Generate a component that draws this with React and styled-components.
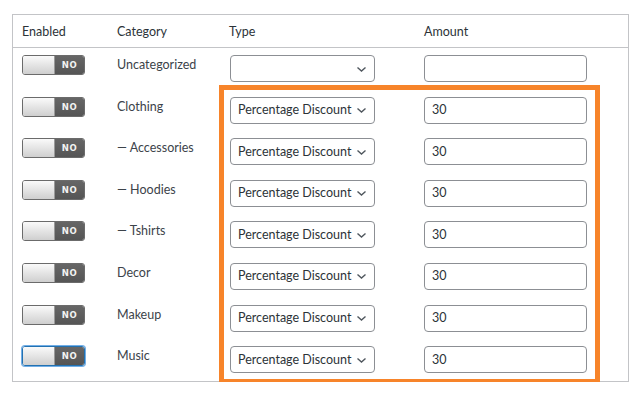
import React from "react";
import styled, { createGlobalStyle } from "styled-components";

const GlobalStyle = createGlobalStyle`
  body {
    margin: 0;
    background: #ffffff;
    font-family: Lato, "Liberation Sans", sans-serif;
    font-size: 12.5px;
    color: #3c434a;
  }
`;

const Page = styled.div`
  position: relative;
  padding: 14px 15px 0 12px;
`;

const Table = styled.div`
  width: 617px;
  border: 1px solid #c3c4c7;
  box-sizing: border-box;
`;

const Row = styled.div`
  display: grid;
  grid-template-columns: 95px 112px 195px 1fr;
  height: ${p => (p.head ? "32px" : "41.6px")};
  border-bottom: ${p => (p.head ? "1px solid #c3c4c7" : "none")};
  align-items: ${p => (p.head ? "center" : "start")};
`;

const Cell = styled.div`
  padding: ${p => (p.head ? "2px 9px 0 9px" : "7px 9px 0 9px")};
  color: ${p => (p.head ? "#2c3338" : "#3c434a")};
  line-height: 18px;
`;

const Label = styled.div`
  padding-top: 1px;
`;

const Toggle = styled.div`
  display: flex;
  width: 63px;
  height: 20px;
  box-sizing: border-box;
  border: 1px solid ${p => (p.focus ? "#2271b1" : "#6b6b6b")};
  box-shadow: ${p => (p.focus ? "0 0 0 1px #72aee6" : "none")};
  border-radius: 3px;
  overflow: hidden;
`;

const Knob = styled.div`
  width: 31px;
  background: linear-gradient(#fafafa, #cfcfcf);
  border-right: 1px solid #9a9a9a;
`;

const Off = styled.div`
  flex: 1;
  background: linear-gradient(#666, #555);
  color: #f2f2f2;
  font-family: "DejaVu Sans", sans-serif;
  font-weight: bold;
  font-size: 8.5px;
  letter-spacing: 0.5px;
  display: flex;
  align-items: center;
  justify-content: center;
`;

const Select = styled.div`
  display: flex;
  align-items: center;
  justify-content: space-between;
  width: 145px;
  height: 27px;
  margin-left: 1px;
  box-sizing: border-box;
  border: 1px solid #8c8f94;
  border-radius: 4px;
  padding: 0 7px 0 7px;
  color: #2c3338;
  white-space: nowrap;
`;

const Input = styled.div`
  display: flex;
  align-items: center;
  width: 163px;
  height: 27px;
  box-sizing: border-box;
  border: 1px solid #8c8f94;
  border-radius: 4px;
  padding: 0 7px;
  color: #2c3338;
`;

const Highlight = styled.div`
  position: absolute;
  left: 219px;
  top: 85px;
  width: 381px;
  height: 299px;
  box-sizing: border-box;
  border: 5px solid #f7842a;
  pointer-events: none;
`;

const Chevron = () => (
  <svg width="11" height="10" viewBox="0 0 11 10">
    <path d="M1.5 3.5 L5.5 7 L9.5 3.5" fill="none" stroke="#50575e" strokeWidth="1.4" />
  </svg>
);

const rows = [
  { name: "Uncategorized", empty: true },
  { name: "Clothing" },
  { name: "— Accessories" },
  { name: "— Hoodies" },
  { name: "— Tshirts" },
  { name: "Decor" },
  { name: "Makeup" },
  { name: "Music", focus: true }
];

export default function App() {
  return (
    <Page>
      <GlobalStyle />
      <Table>
        <Row head>
          <Cell head>Enabled</Cell>
          <Cell head>Category</Cell>
          <Cell head>Type</Cell>
          <Cell head>Amount</Cell>
        </Row>
        {rows.map(r => (
          <Row key={r.name}>
            <Cell>
              <Toggle focus={r.focus}>
                <Knob />
                <Off>NO</Off>
              </Toggle>
            </Cell>
            <Cell>
              <Label>{r.name}</Label>
            </Cell>
            <Cell>
              <Select>
                <span>{r.empty ? "" : "Percentage Discount"}</span>
                <Chevron />
              </Select>
            </Cell>
            <Cell>
              <Input>{r.empty ? "" : "30"}</Input>
            </Cell>
          </Row>
        ))}
      </Table>
      <Highlight />
    </Page>
  );
}
